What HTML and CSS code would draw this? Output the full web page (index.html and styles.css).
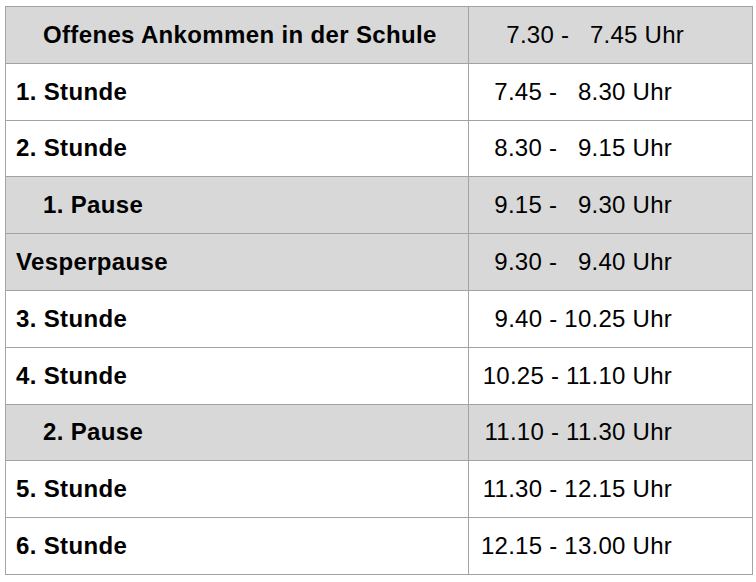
FILE: index.html
```html
<!DOCTYPE html>
<html lang="de">
<head>
<meta charset="utf-8">
<title>Stundenplan</title>
<link rel="stylesheet" href="styles.css">
</head>
<body>
<table class="plan">
  <colgroup><col class="c-name"><col class="c-time"></colgroup>
  <tr class="gray head"><td class="indent">Offenes Ankommen in der Schule</td><td class="time">7.30 -   7.45 Uhr</td></tr>
  <tr><td>1. Stunde</td><td class="time">7.45 -   8.30 Uhr</td></tr>
  <tr><td>2. Stunde</td><td class="time">8.30 -   9.15 Uhr</td></tr>
  <tr class="gray"><td class="indent">1. Pause</td><td class="time">9.15 -   9.30 Uhr</td></tr>
  <tr class="gray"><td>Vesperpause</td><td class="time">9.30 -   9.40 Uhr</td></tr>
  <tr><td>3. Stunde</td><td class="time">9.40 - 10.25 Uhr</td></tr>
  <tr><td>4. Stunde</td><td class="time">10.25 - 11.10 Uhr</td></tr>
  <tr class="gray"><td class="indent">2. Pause</td><td class="time">11.10 - 11.30 Uhr</td></tr>
  <tr><td>5. Stunde</td><td class="time">11.30 - 12.15 Uhr</td></tr>
  <tr><td>6. Stunde</td><td class="time">12.15 - 13.00 Uhr</td></tr>
</table>
</body>
</html>
```
FILE: styles.css
```css
html, body {
  margin: 0;
  padding: 0;
  background: #ffffff;
}
body {
  padding: 6px 0 0 5px;
  font-family: "Liberation Sans", Arial, sans-serif;
  color: #000;
}
.plan {
  border-collapse: collapse;
  width: 747px;
  table-layout: fixed;
}
.c-name { width: 463px; }
.c-time { width: 284px; }
.plan td {
  border: 1px solid #a3a3a3;
  height: 56.8px;
  padding: 0 0 0 10px;
  font-size: 24px;
  letter-spacing: 0.35px;
  font-weight: bold;
  vertical-align: middle;
  box-sizing: border-box;
}
.plan td.indent {
  padding-left: 37px;
}
.plan td.time {
  border-left: 1px solid #3a3a3a;
  font-weight: normal;
  letter-spacing: 0.25px;
  text-align: right;
  white-space: pre;
  padding: 0 80px 0 0;
}
.plan tr.head td.time {
  padding-right: 68px;
}
.plan tr.gray td {
  background: #d8d8d8;
}
```
